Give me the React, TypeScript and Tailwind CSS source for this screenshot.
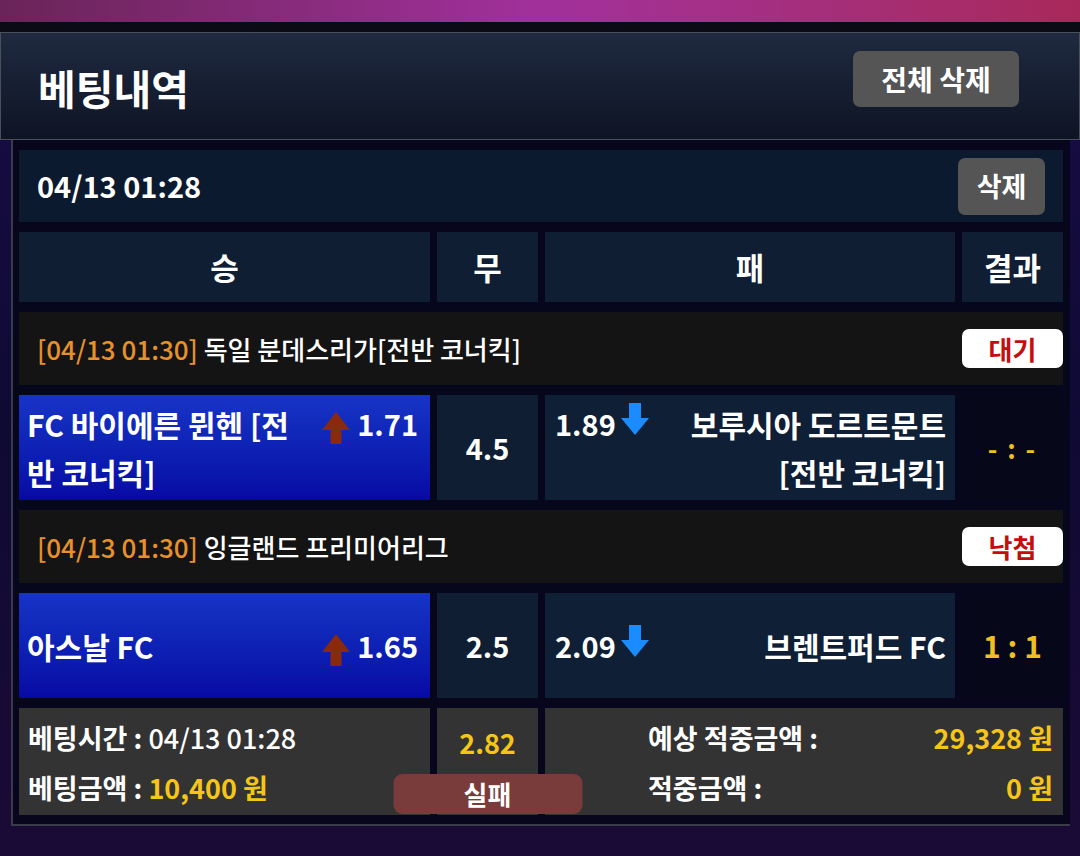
import type { ReactNode } from 'react';

const FONT = "font-['Noto_Sans_CJK_KR','Noto_Sans',sans-serif]";

function UpArrow() {
  return (
    <svg width="28" height="32" viewBox="0 0 28 32" className="shrink-0">
      <polygon points="14,0 28,18 19.5,18 19.5,32 8.5,32 8.5,18 0,18" fill="#8a2a0c" />
    </svg>
  );
}

function DownArrow() {
  return (
    <svg width="28" height="32" viewBox="0 0 28 32" className="shrink-0">
      <polygon points="8,0 20,0 20,15 28,15 14,32 0,15 8,15" fill="#1a8cff" />
    </svg>
  );
}

type Match = {
  time: string;
  league: string;
  status: string;
  home: string;
  homeOdds: string;
  draw: string;
  awayOdds: string;
  away: ReactNode;
  score: string;
};

const matches: Match[] = [
  {
    time: '[04/13 01:30]',
    league: '독일 분데스리가[전반 코너킥]',
    status: '대기',
    home: 'FC 바이에른 뮌헨 [전반 코너킥]',
    homeOdds: '1.71',
    draw: '4.5',
    awayOdds: '1.89',
    away: '보루시아 도르트문트 [전반 코너킥]',
    score: '- : -',
  },
  {
    time: '[04/13 01:30]',
    league: '잉글랜드 프리미어리그',
    status: '낙첨',
    home: '아스날 FC',
    homeOdds: '1.65',
    draw: '2.5',
    awayOdds: '2.09',
    away: '브렌트퍼드 FC',
    score: '1 : 1',
  },
];

function MatchRows({ m }: { m: Match }) {
  const pending = m.score === '- : -';
  return (
    <>
      {/* League */}
      <div className="col-span-4 flex h-[73px] items-center justify-between bg-[#141414]">
        <p className="pl-[18px] text-[26px] font-medium text-white">
          <span className="text-[#e8902a]">{m.time}</span> {m.league}
        </p>
        <span className="flex h-[39px] w-[101px] items-center justify-center rounded-[7px] bg-white text-[26px] font-bold text-[#c40d0d]">
          {m.status}
        </span>
      </div>

      {/* Teams */}
      <div className="flex min-h-[105px] items-center bg-gradient-to-b from-[#1734c6] to-[#0808a4] pl-[8px] pr-[12px]">
        <div className="flex w-full items-start justify-between">
          <span className="min-w-0 flex-1 text-[30px] font-bold leading-[48px] text-white">{m.home}</span>
          <div className="ml-[8px] flex h-[48px] shrink-0 items-center gap-[7px]">
            <span className="mt-[8px]">
              <UpArrow />
            </span>
            <span className="text-[29px] font-bold text-white">{m.homeOdds}</span>
          </div>
        </div>
      </div>
      <div className="flex items-center justify-center bg-[#0f1e33] text-[29px] font-bold text-white">{m.draw}</div>
      <div className="flex items-center bg-[#0f1f36] pl-[10px] pr-[9px]">
        <div className="flex w-full items-start justify-between">
          <div className="flex h-[48px] shrink-0 items-center gap-[5px]">
            <span className="text-[29px] font-bold text-white">{m.awayOdds}</span>
            <span className="-mt-[10px]">
              <DownArrow />
            </span>
          </div>
          <span className="ml-[24px] min-w-0 flex-1 text-right text-[30px] font-bold leading-[48px] text-white">{m.away}</span>
        </div>
      </div>
      <div
        className={
          'flex items-center justify-center bg-[#07071a] font-bold text-[#f0c020] ' +
          (pending ? 'text-[26px] tracking-[2px]' : 'text-[30px]')
        }
      >
        {m.score}
      </div>
    </>
  );
}

export default function App() {
  return (
    <div className={`relative h-[856px] w-[1080px] overflow-hidden bg-gradient-to-b from-[#1a0c48] via-[#0f0a34] to-[#1a0a36] ${FONT}`}>
      {/* top band */}
      <div className="h-[22px] bg-gradient-to-r from-[#6a2458] via-[#a2309c] to-[#a8285a]" />
      <div className="h-[10px] bg-[#0b0b16]" />

      {/* Header */}
      <div className="flex h-[108px] items-center justify-between border border-[#4a4f5c] bg-gradient-to-b from-[#1f2a40] to-[#0e1424] pl-[37px] pr-[60px]">
        <h1 className="mt-[4px] text-[41px] font-bold text-white">베팅내역</h1>
        <button className="mt-[-14px] h-[56px] w-[166px] rounded-[7px] bg-[#555555] text-[28px] font-bold text-white">
          전체 삭제
        </button>
      </div>

      {/* List */}
      <div className="ml-[11px] w-[1059px] border-b-2 border-l-2 border-[#3a3a48] bg-[#06061a]/90 px-[6px] pb-[9px] pt-[10px]">
        <div className="grid grid-cols-[411px_101px_410px_101px] gap-x-[7px] gap-y-[10px]">
          <div className="col-span-4 flex h-[72px] items-center justify-between bg-[#0b1a2f] pl-[18px] pr-[18px]">
            <span className="text-[29px] font-bold text-white">04/13 01:28</span>
            <button className="h-[57px] w-[87px] rounded-[7px] bg-[#555555] text-[27px] font-bold text-white">삭제</button>
          </div>

          {['승', '무', '패', '결과'].map((h) => (
            <div key={h} className="flex h-[70px] items-center justify-center bg-[#0f1e33] text-[31px] font-bold text-white">
              {h}
            </div>
          ))}

          {matches.map((m) => (
            <MatchRows key={m.league} m={m} />
          ))}

          {/* Summary */}
          <div className="h-[107px] bg-[#333333] pl-[9px] pt-[5px] text-[27px] font-bold leading-[50px] text-white">
            <p>
              베팅시간 : <span className="font-medium">04/13 01:28</span>
            </p>
            <p>
              베팅금액 : <span className="text-[#f5c518]">10,400 원</span>
            </p>
          </div>
          <div className="relative bg-[#333333] pt-[10px] text-center text-[27px] font-bold leading-[50px] text-[#f5c518]">
            2.82
            <span className="absolute left-1/2 top-[66px] flex h-[40px] w-[189px] -translate-x-1/2 items-center justify-center rounded-[9px] bg-[#7a3b3b] text-[26px] leading-none text-white">
              실패
            </span>
          </div>
          <div className="col-span-2 bg-[#333333] pl-[103px] pr-[10px] pt-[5px] text-[27px] font-bold leading-[50px]">
            <div className="flex justify-between">
              <span className="text-white">예상 적중금액 :</span>
              <span className="text-[#f5c518]">29,328 원</span>
            </div>
            <div className="flex justify-between">
              <span className="text-white">적중금액 :</span>
              <span className="text-[#f5c518]">0 원</span>
            </div>
          </div>
        </div>
      </div>
    </div>
  );
}
